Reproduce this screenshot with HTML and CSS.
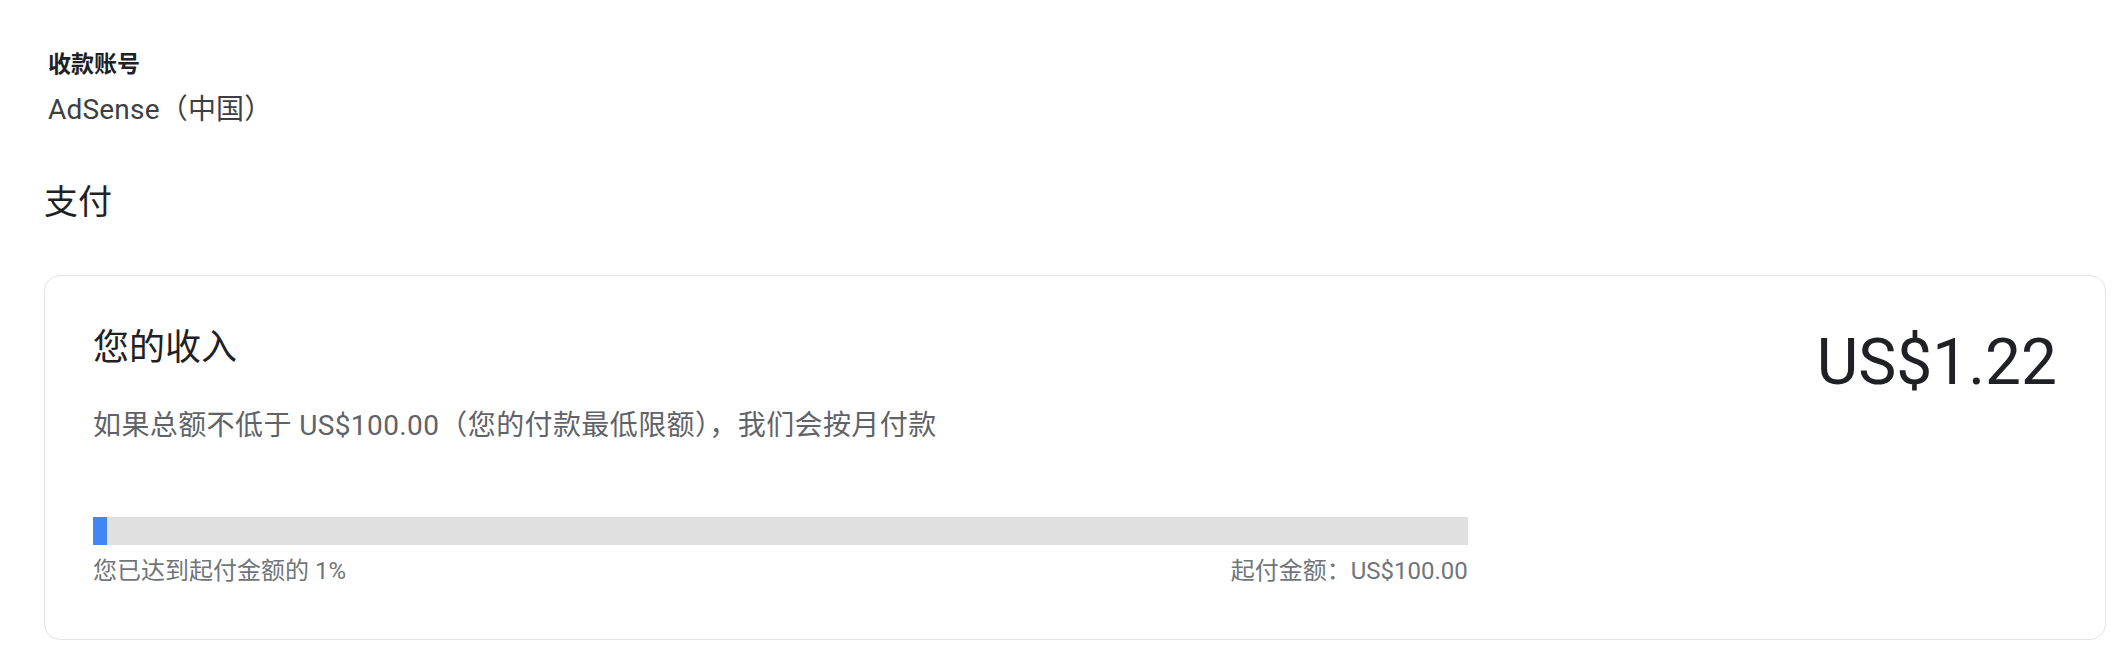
FILE: index.html
```html
<!DOCTYPE html>
<html lang="zh-CN">
<head>
<meta charset="utf-8">
<title>支付</title>
<link rel="stylesheet" href="styles.css">
</head>
<body>
<main class="page">
  <section class="account">
    <div class="account-label">收款账号</div>
    <div class="account-value">AdSense（中国）</div>
  </section>
  <h2 class="section-title">支付</h2>
  <section class="card">
    <div class="card-head">
      <div class="card-text">
        <h3 class="card-title">您的收入</h3>
        <p class="card-desc">如果总额不低于 US$100.00（您的付款最低限额），我们会按月付款</p>
      </div>
      <div class="amount">US$1.22</div>
    </div>
    <div class="progress">
      <div class="bar"><div class="bar-fill" style="width: 1%"></div></div>
      <div class="bar-labels">
        <span>您已达到起付金额的 1%</span>
        <span>起付金额：US$100.00</span>
      </div>
    </div>
  </section>
</main>
</body>
</html>
```

FILE: styles.css
```css
* { box-sizing: border-box; }

html, body {
  margin: 0;
  padding: 0;
  background: #ffffff;
}

body {
  font-family: Roboto, "Noto Sans CJK SC", sans-serif;
  color: #202124;
}

.page {
  padding: 48px 20px 0 44px;
}

.account {
  padding-left: 4px;
}

.account-label {
  font-size: 23px;
  line-height: 33px;
  font-weight: 700;
  color: #202124;
}

.account-value {
  margin-top: 9px;
  font-size: 28px;
  line-height: 40px;
  letter-spacing: 0.2px;
  color: #3c4043;
}

.section-title {
  margin: 50px 0 0 0;
  font-size: 34px;
  line-height: 44px;
  font-weight: 400;
  color: #202124;
}

.card {
  margin-top: 51px;
  border: 1px solid #e3e3e8;
  border-radius: 16px;
  padding: 48px 48px 52px 48px;
}

.card-head {
  display: flex;
  justify-content: space-between;
  align-items: flex-start;
}

.card-title {
  margin: 0;
  font-size: 36px;
  line-height: 48px;
  font-weight: 400;
  color: #202124;
}

.card-desc {
  margin: 34px 0 0 0;
  font-size: 28px;
  line-height: 40px;
  letter-spacing: 0.4px;
  color: #5f6368;
}

.amount {
  font-size: 64px;
  line-height: 78px;
  color: #202124;
}

.progress {
  width: 70%;
  margin-top: 71px;
}

.bar {
  height: 28px;
  background: #e0e0e0;
}

.bar-fill {
  height: 100%;
  background: #4285f4;
}

.bar-labels {
  display: flex;
  justify-content: space-between;
  margin-top: 10px;
  font-size: 24px;
  line-height: 32px;
  color: #70757a;
}
```
